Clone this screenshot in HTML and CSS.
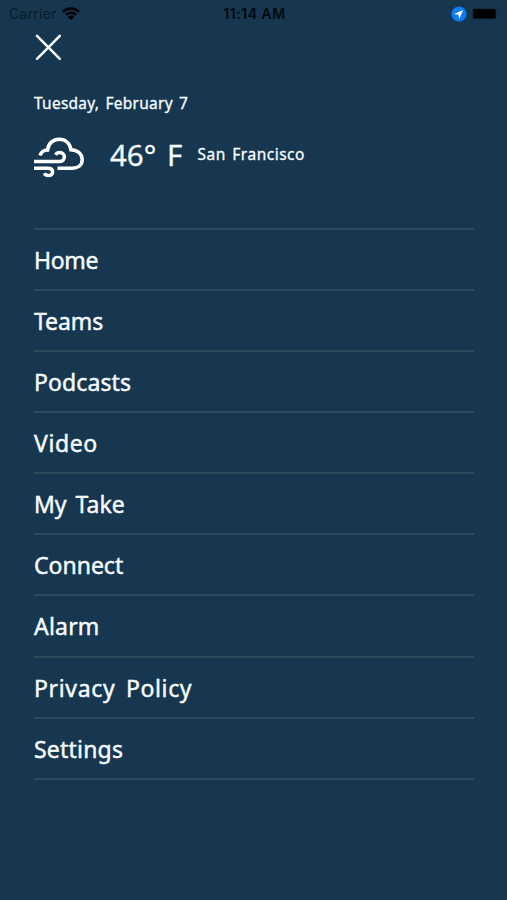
FILE: index.html
```html
<!DOCTYPE html>
<html lang="en">
<head>
<meta charset="utf-8">
<title>Menu</title>
<link rel="stylesheet" href="styles.css">
</head>
<body>
<div class="status">
  <div class="status-left">
    <span class="carrier">Carrier</span>
    <svg class="wifi" width="18" height="13" viewBox="0 0 18 13"><g fill="none" stroke="#000" stroke-width="2.5"><path d="M.9 4.8a11.5 11.5 0 0 1 16.2 0"/><path d="M3.9 7.9a7.2 7.2 0 0 1 10.2 0"/></g><path d="M5.9 9.9a4.4 4.4 0 0 1 6.2 0L9 13z"/></svg>
  </div>
  <span class="time">11:14 AM</span>
  <div class="status-right">
    <svg width="16" height="16" viewBox="0 0 16 16"><circle cx="8" cy="8" r="7.6" fill="#0b7cf6"/><path d="M12.2 3.900 3 7.900l4.400.8.800 4.400z" fill="#fff"/></svg>
    <svg width="28" height="12" viewBox="0 0 28 12"><rect x=".5" y=".5" width="24.5" height="11" rx="2.5" fill="none" stroke="#142f43"/><rect x="1.200" y="1" width="22.500" height="9.600" rx="1.2"/><path d="M26 4v4q1.5-.6 1.5-2T26 4" fill="#142f43"/></svg>
  </div>
</div>
<button class="close" aria-label="Close"><svg width="26" height="26" viewBox="0 0 26 26"><path d="m2 1.800 22.800 23M24.800 1.800 2 24.800" fill="none" stroke="#fff" stroke-width="2.5" stroke-linecap="round"/></svg></button>
<p class="date">Tuesday, February 7</p>
<div class="weather">
  <svg class="cloud" width="52" height="42" viewBox="0 0 52 42"><g fill="none" stroke="#fff" stroke-width="3.5"><path d="M6 19.500C7.200 16 10 14 13.600 14 14.200 7.500 19 3.200 25.300 3.200c6 0 10.800 4 11.600 10.600 7.100.3 11.300 4.500 11.300 9.700 0 5.600-4 8.700-10 8.700H23.500"/><path d="M0 25.500h25.600c3 0 4.700-1.900 4.700-4.400 0-2.800-1.900-4.500-4.600-4.500-1.900 0-3.300.9-4.100 2.300"/><path d="M0 32.200h13.700c3.300 0 4.900 1.700 4.900 3.700 0 2.300-1.900 3.600-4.100 3.600-1.900 0-3.400-.8-4.200-2.300"/></g></svg>
  <span class="temp">46<span class="degree">°</span> F</span>
  <span class="city">San Francisco</span>
</div>
<nav class="menu">
  <a class="item home">Home</a>
  <a class="item teams">Teams</a>
  <a class="item podcasts">Podcasts</a>
  <a class="item video">Video</a>
  <a class="item take">My Take</a>
  <a class="item connect">Connect</a>
  <a class="item alarm">Alarm</a>
  <a class="item privacy">Privacy Policy</a>
  <a class="item settings">Settings</a>
</nav>
</body>
</html>
```
FILE: styles.css
```css
* { box-sizing: border-box; }
body {
  margin: 0;
  height: 900px;
  overflow: hidden;
  background: #16374f;
  color: #f6fbff;
  font-family: "Noto Sans", sans-serif;
}
svg { display: block; flex: none; }
.status {
  display: grid;
  grid-template-columns: 1fr auto 1fr;
  align-items: center;
  height: 27px;
  padding: 0 7px 0 9px;
  font: 14px/27px Inter, sans-serif;
  color: #02080d;
}
.status-left, .status-right { display: flex; align-items: center; }
.status-left { gap: 6px; }
.status-right { gap: 5px; justify-content: flex-end; }
.carrier { width: 47px; letter-spacing: .25px; color: #081b29; white-space: nowrap; }
.time { font-weight: 600; letter-spacing: .55px; }
.close {
  display: block;
  margin: 7px 0 0 35px;
  padding: 0;
  border: 0;
  background: none;
}
.date {
  margin: 31px 0 0 34px;
  font-size: 15.500px;
  line-height: 24px;
  letter-spacing: .25px;
  word-spacing: 2px;
  -webkit-text-stroke: .3px;
}
.weather {
  display: flex;
  align-items: center;
  height: 50px;
  margin: 17px 0 0 34px;
}
.cloud { margin-top: -1px; }
.temp {
  width: 88px;
  margin-top: -5px;
  padding-left: 24px;
  font-size: 29.500px;
  line-height: 40px;
  word-spacing: 3px;
  white-space: nowrap;
  -webkit-text-stroke: .3px;
}
.city {
  margin: -7px 0 0 23.500px;
  font-size: 15.500px;
  letter-spacing: .5px;
  word-spacing: 2px;
  -webkit-text-stroke: .3px;
}
.menu {
  margin: 46px 33px 0 34px;
  border-top: 2px solid #2b4a5b;
}
.item {
  display: block;
  height: 61.090px;
  border-bottom: 2px solid #2b4a5b;
  font-size: 23px;
  line-height: 61px;
  -webkit-text-stroke: .45px;
}
.home { letter-spacing: -.35px; }
.teams { letter-spacing: -.1px; }
.podcasts { letter-spacing: .1px; }
.video { letter-spacing: .6px; }
.take { word-spacing: 3px; }
.connect { letter-spacing: 0; }
.alarm { letter-spacing: .2px; }
.privacy { letter-spacing: .65px; word-spacing: 4px; }
.settings { letter-spacing: .2px; }
```
